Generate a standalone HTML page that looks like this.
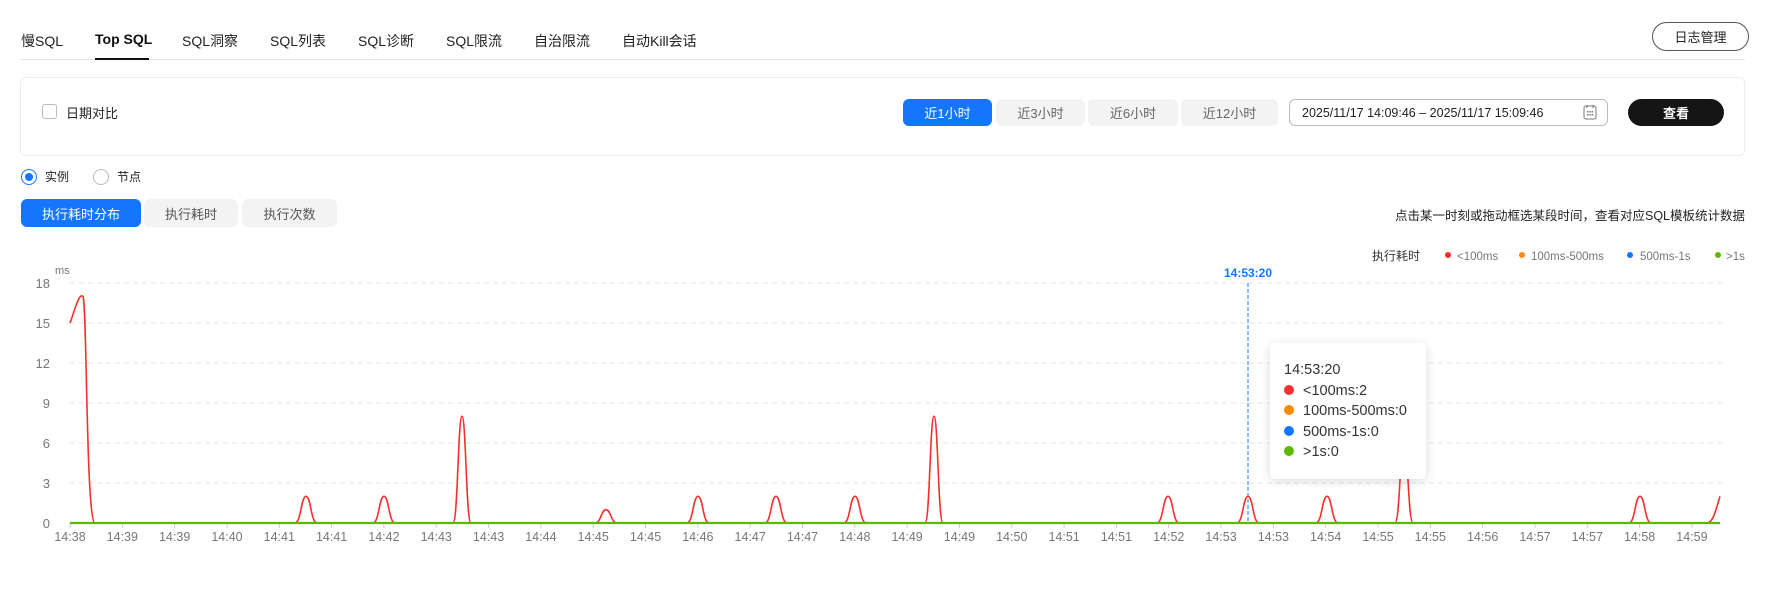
<!DOCTYPE html>
<html><head><meta charset="utf-8"><style>
*{margin:0;padding:0;box-sizing:border-box}
body{width:1770px;height:589px;background:#fff;font-family:"Liberation Sans","Noto Sans CJK SC",sans-serif;color:#222;position:relative;overflow:hidden}
.a{position:absolute;white-space:nowrap}
.tab{font-size:14px;top:31px;color:#222}
.btn{position:absolute;display:flex;align-items:center;justify-content:center;font-size:13px;border-radius:6px}
</style></head><body>
<div class="a tab" style="left:21px">慢SQL</div>
<div class="a tab" style="left:95px;font-weight:bold;color:#111">Top SQL</div>
<div class="a tab" style="left:182px">SQL洞察</div>
<div class="a tab" style="left:270px">SQL列表</div>
<div class="a tab" style="left:358px">SQL诊断</div>
<div class="a tab" style="left:446px">SQL限流</div>
<div class="a tab" style="left:534px">自治限流</div>
<div class="a tab" style="left:622px">自动Kill会话</div>
<div class="a" style="left:20px;top:59px;width:1725px;height:1px;background:#e8e8e8"></div>
<div class="a" style="left:95px;top:58px;width:54px;height:2px;background:#111"></div>
<div class="btn" style="left:1652px;top:22px;width:97px;height:29px;border:1px solid #555;border-radius:15px;color:#222">日志管理</div>

<div class="a" style="left:20px;top:77px;width:1725px;height:79px;border:1px solid #ececec;border-radius:6px"></div>
<div class="a" style="left:42px;top:104px;width:15px;height:15px;border:1px solid #bbb;border-radius:3px"></div>
<div class="a" style="left:66px;top:103px;font-size:13px">日期对比</div>
<div class="btn" style="left:903px;top:99px;width:89px;height:27px;background:#1476ff;color:#fff">近1小时</div>
<div class="btn" style="left:996px;top:99px;width:89px;height:27px;background:#f3f3f3;color:#666">近3小时</div>
<div class="btn" style="left:1088px;top:99px;width:90px;height:27px;background:#f3f3f3;color:#666">近6小时</div>
<div class="btn" style="left:1181px;top:99px;width:97px;height:27px;background:#f3f3f3;color:#666">近12小时</div>
<div class="btn" style="left:1289px;top:99px;width:319px;height:27px;border:1px solid #bbb;justify-content:flex-start;padding-left:12px;color:#222;font-size:12.5px">2025/11/17 14:09:46 – 2025/11/17 15:09:46</div>
<svg class="a" style="left:1583px;top:104px" width="14" height="16" viewBox="0 0 14 16"><rect x="1" y="2" width="12" height="13" rx="2" fill="none" stroke="#777"/><path d="M4 1v3M10 1v3" stroke="#777"/><g fill="#777"><rect x="4" y="7" width="1.5" height="1.5"/><rect x="6.3" y="7" width="1.5" height="1.5"/><rect x="8.6" y="7" width="1.5" height="1.5"/><rect x="4" y="10" width="1.5" height="1.5"/><rect x="6.3" y="10" width="1.5" height="1.5"/><rect x="8.6" y="10" width="1.5" height="1.5"/></g></svg>
<div class="btn" style="left:1628px;top:99px;width:96px;height:27px;background:#151515;color:#fff;border-radius:14px;font-weight:bold">查看</div>

<div class="a" style="left:21px;top:169px;width:16px;height:16px;border:1px solid #1476ff;border-radius:50%"><div style="position:absolute;left:3px;top:3px;width:8px;height:8px;border-radius:50%;background:#1476ff"></div></div>
<div class="a" style="left:45px;top:168px;font-size:12px">实例</div>
<div class="a" style="left:93px;top:169px;width:16px;height:16px;border:1px solid #bbb;border-radius:50%"></div>
<div class="a" style="left:117px;top:168px;font-size:12px">节点</div>

<div class="btn" style="left:21px;top:199px;width:120px;height:28px;background:#1476ff;color:#fff">执行耗时分布</div>
<div class="btn" style="left:144px;top:199px;width:94px;height:28px;background:#f3f3f3;color:#555">执行耗时</div>
<div class="btn" style="left:242px;top:199px;width:95px;height:28px;background:#f3f3f3;color:#555">执行次数</div>
<div class="a" style="right:25px;top:205px;font-size:12.5px">点击某一时刻或拖动框选某段时间，查看对应SQL模板统计数据</div>

<svg class="a" style="left:0;top:240px" width="1770" height="320" viewBox="0 240 1770 320" font-family="Liberation Sans, sans-serif">
<g font-size="12" fill="#333"><text x="1372" y="260">执行耗时</text></g>
<g font-size="11.5" fill="#777"><circle cx="1448" cy="255" r="3" fill="#f5302e"/><text x="1457" y="260">&lt;100ms</text>
<circle cx="1522" cy="255" r="3" fill="#ff8a00"/><text x="1531" y="260">100ms-500ms</text>
<circle cx="1630" cy="255" r="3" fill="#1476ff"/><text x="1640" y="260">500ms-1s</text>
<circle cx="1718" cy="255" r="3" fill="#5cb800"/><text x="1726" y="260">&gt;1s</text></g>
<text x="1248" y="277" text-anchor="middle" font-size="12" font-weight="bold" fill="#1476ff">14:53:20</text>
<text x="55" y="274" font-size="11" fill="#777">ms</text>
<g stroke="#e6e6e6" stroke-dasharray="5,4"><path d="M70 283H1723M70 323H1723M70 363H1723M70 403H1723M70 443H1723M70 483H1723"/></g>
<g font-size="13" fill="#777" text-anchor="end"><text x="50" y="288">18</text><text x="50" y="328">15</text><text x="50" y="368">12</text><text x="50" y="408">9</text><text x="50" y="448">6</text><text x="50" y="488">3</text><text x="50" y="528">0</text></g>
<g id="ticks" stroke="#ccc"></g>
<g font-size="12.5" fill="#777" text-anchor="middle" id="xl"></g>
<path d="M1248 283V523" stroke="#1476ff" stroke-dasharray="4,2" stroke-width="1"/>
<path id="red" fill="none" stroke="#f5302e" stroke-width="1.6"/>
<path d="M70 523H1720" stroke="#5cb800" stroke-width="2.2"/>
</svg>
<div class="a" style="left:1270px;top:343px;width:156px;height:136px;background:#fff;border-radius:5px;box-shadow:0 2px 10px rgba(0,0,0,.15);font-size:14.5px;color:#333;padding:17px 0 0 14px;line-height:20.5px">
<div>14:53:20</div>
<div><span style="display:inline-block;width:10px;height:10px;border-radius:50%;background:#f5302e;margin-right:9px"></span>&lt;100ms:2</div>
<div><span style="display:inline-block;width:10px;height:10px;border-radius:50%;background:#ff8a00;margin-right:9px"></span>100ms-500ms:0</div>
<div><span style="display:inline-block;width:10px;height:10px;border-radius:50%;background:#1476ff;margin-right:9px"></span>500ms-1s:0</div>
<div><span style="display:inline-block;width:10px;height:10px;border-radius:50%;background:#5cb800;margin-right:9px"></span>&gt;1s:0</div>
</div>
<script>
var labs="14:38 14:39 14:39 14:40 14:41 14:41 14:42 14:43 14:43 14:44 14:45 14:45 14:46 14:47 14:47 14:48 14:49 14:49 14:50 14:51 14:51 14:52 14:53 14:53 14:54 14:55 14:55 14:56 14:57 14:57 14:58 14:59".split(" ");
var t="",l="";for(var i=0;i<32;i++){var x=70+i*52.32;t+='<path d="M'+x+' 523v5"/>';l+='<text x="'+x+'" y="541">'+labs[i]+'</text>';}
document.getElementById("ticks").innerHTML=t;document.getElementById("xl").innerHTML=l;
function Y(v){return 523-v*13.33}
var d="M70 "+Y(15)+" C75 "+Y(16)+" 79 "+Y(17.3)+" 83 "+Y(17)+" C87 "+Y(16.5)+" 86 "+Y(0)+" 95 523";
var pk=[[306,2],[384,2],[462,8],[606,1],[698,2],[776,2],[855,2],[934,8],[1168,2],[1248,2],[1327,2],[1404,6],[1640,2]];
pk.forEach(function(p){var x=p[0],y=Y(p[1]),w=p[1]>5?9:11;d+=" L"+(x-w)+" 523 C"+(x-w*0.45)+" 523 "+(x-w*0.45)+" "+y+" "+x+" "+y+" C"+(x+w*0.45)+" "+y+" "+(x+w*0.45)+" 523 "+(x+w)+" 523";});
d+=" L1707 523 C1713 523 1716 "+Y(1)+" 1720 "+Y(2);
document.getElementById("red").setAttribute("d",d);
</script>
</body></html>
